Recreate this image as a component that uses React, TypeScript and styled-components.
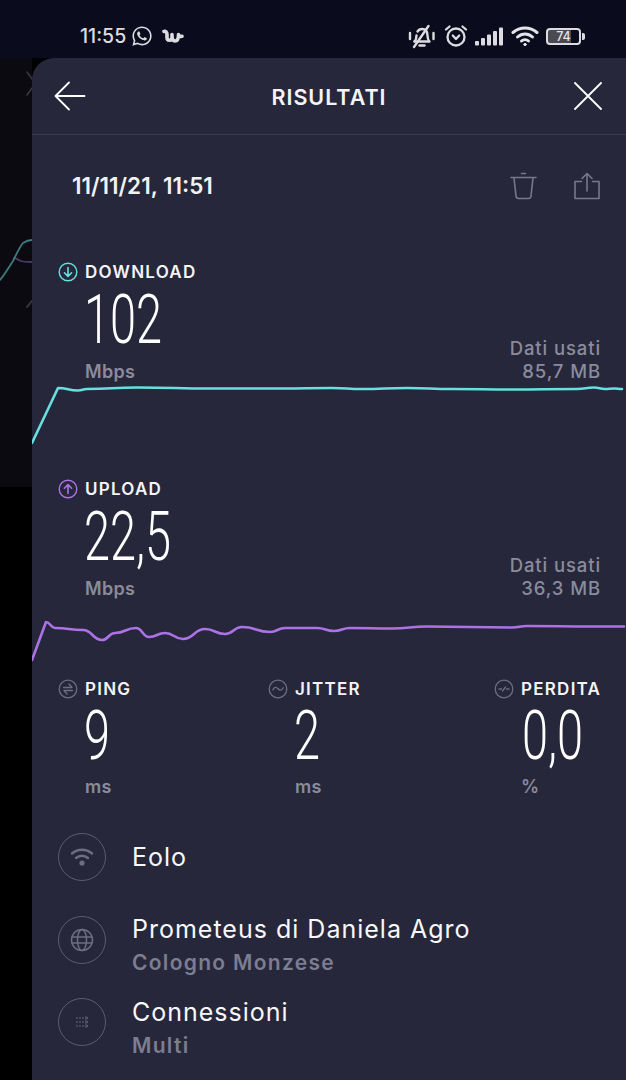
import styled, { createGlobalStyle } from "styled-components";
import { FaWhatsapp } from "react-icons/fa";

const GlobalStyle = createGlobalStyle`
	html, body {
		margin: 0;
		padding: 0;
		background: #000;
	}
	body {
		font-family: Inter, "Liberation Sans", sans-serif;
		color: #fff;
	}
`;

const Screen = styled.div`
	width: 626px;
	height: 1080px;
	overflow: hidden;
	display: flex;
	flex-direction: column;
	background: #000;
`;

const StatusBar = styled.div`
	height: 58px;
	flex-shrink: 0;
	background: #0a0b1c;
	display: flex;
	align-items: center;
	padding: 14px 45px 0 80px;
	box-sizing: border-box;
	color: #dcdce0;
`;

const Clock = styled.span`
	font-size: 19.5px;
	font-weight: 500;
	margin-right: 5px;
`;

const WishLogo = styled.svg`
	margin-left: 9px;
`;

const StatusRight = styled.div`
	margin-left: auto;
	display: flex;
	align-items: center;
	gap: 7.5px;
`;

const Battery = styled.div`
	position: relative;
	width: 31px;
	height: 13px;
	border: 2px solid #dcdce0;
	border-radius: 4px;
	font-size: 12.5px;
	font-weight: 500;
	line-height: 13px;
	text-align: center;
	color: #e4e4e8;
	background: linear-gradient(90deg, #4a4a53 74%, transparent 74%);
	&::after {
		content: "";
		position: absolute;
		right: -6px;
		top: 3px;
		width: 3px;
		height: 7px;
		border-radius: 0 2px 2px 0;
		background: #dcdce0;
	}
`;

const Body = styled.div`
	flex: 1;
	display: flex;
	min-height: 0;
`;

const BackStrip = styled.div`
	position: relative;
	width: 32px;
	flex-shrink: 0;
	background: linear-gradient(#0a0a10 0, #0a0a10 429px, #000 429px);
	svg {
		position: absolute;
		left: 0;
		top: 0;
	}
`;

const Panel = styled.div`
	flex: 1;
	min-width: 0;
	background: #26273a;
	border-top-left-radius: 22px;
`;

const Header = styled.div`
	height: 77px;
	box-sizing: border-box;
	border-bottom: 1px solid #38394b;
	display: flex;
	align-items: center;
	justify-content: space-between;
	padding: 0 24px 0 22px;
`;

const Title = styled.h1`
	margin: 0;
	font-size: 21.5px;
	font-weight: 600;
	letter-spacing: 1px;
	color: #f4f4f6;
	transform: translate(-1px, 1px);
`;

const DateRow = styled.div`
	height: 101px;
	display: flex;
	align-items: center;
	padding: 0 26px 0 40px;
	box-sizing: border-box;
	margin-bottom: 26px;
	gap: 37px;
`;

const DateText = styled.div`
	font-size: 22.5px;
	font-weight: 600;
	margin-right: auto;
	color: #f2f2f4;
`;

const Section = styled.section<{ $height: number }>`
	height: ${(p) => p.$height}px;
	position: relative;
`;

const MetricLabelRow = styled.div`
	display: flex;
	align-items: center;
	gap: 7px;
	height: 20px;
	padding-left: 26px;
`;

const MetricLabel = styled.span`
	font-size: 17px;
	font-weight: 600;
	letter-spacing: 1.25px;
	color: #f4f4f6;
`;

const BigNumber = styled.div`
	height: 62px;
	font-family: Roboto, "Liberation Sans", sans-serif;
	font-weight: 350;
	font-size: 69px;
	line-height: 62px;
	color: #fff;
	transform: scaleX(0.68);
	transform-origin: left center;
	white-space: nowrap;
`;

const SpeedValue = styled(BigNumber)`
	margin-left: 52px;
	margin-top: 7px;
`;

const UnitRow = styled.div`
	display: flex;
	justify-content: space-between;
	align-items: flex-end;
	padding: 0 25px 0 53px;
	height: 32px;
`;

const Unit = styled.div`
	font-size: 18px;
	font-weight: 600;
	line-height: 22.5px;
	letter-spacing: 0.3px;
	color: #8a8b9c;
`;

const DataUsed = styled.div`
	text-align: right;
	font-size: 18.5px;
	font-weight: 500;
	line-height: 23px;
	letter-spacing: 0.9px;
	color: #8a8b9c;
`;

const Chart = styled.svg`
	display: block;
	position: absolute;
	left: 0;
	top: 0;
	pointer-events: none;
`;

const StatsRow = styled.div`
	display: flex;
	height: 137px;
`;

const StatBlock = styled.div<{ $width: number }>`
	width: ${(p) => p.$width}px;
	flex-shrink: 0;
`;

const StatValue = styled(BigNumber)<{ $indent?: number }>`
	margin-left: ${(p) => p.$indent ?? 52}px;
	margin-top: 7px;
	height: 60px;
	line-height: 60px;
`;

const StatUnit = styled(Unit)`
	margin-left: 53px;
	margin-top: 10px;
`;

const InfoList = styled.div`
	display: flex;
	flex-direction: column;
`;

const InfoRow = styled.div`
	height: 82.5px;
	display: flex;
	align-items: center;
	padding-left: 26px;
	gap: 26px;
`;

const InfoCircle = styled.div`
	width: 46px;
	height: 46px;
	border: 1.5px solid #5b5c6e;
	border-radius: 50%;
	display: flex;
	align-items: center;
	justify-content: center;
	flex-shrink: 0;
`;

const InfoText = styled.div<{ $twoLines?: boolean }>`
	margin-top: ${(p) => (p.$twoLines ? 13 : 0)}px;
`;

const InfoTitle = styled.div`
	font-size: 25px;
	font-weight: 400;
	letter-spacing: 1px;
	line-height: 33px;
	color: #f8f8fa;
`;

const InfoSub = styled.div`
	font-size: 21px;
	font-weight: 600;
	letter-spacing: 1.3px;
	line-height: 33px;
	color: #7c7d91;
`;

const CYAN = "#66e0e0";
const PURPLE = "#ac72e6";

function smooth(points: number[][]) {
	// catmull-rom-ish path, good enough for the little chart wobble
	let d = `M${points[0][0]} ${points[0][1]}`;
	for (let i = 1; i < points.length; i++) {
		const [x0, y0] = points[i - 1];
		const [x1, y1] = points[i];
		const mx = (x0 + x1) / 2;
		d += i === 1 ? ` L${x1} ${y1}` : ` C${mx} ${y0} ${mx} ${y1} ${x1} ${y1}`;
	}
	return d;
}

const downloadLine = [
	[0, 181], [26, 126], [46, 128.5], [55, 127], [105, 125.5], [180, 126.5], [250, 126.5],
	[300, 126], [330, 127], [375, 126], [420, 127], [480, 127.5], [545, 127], [562, 125.5],
	[573, 127], [582, 126.5], [590, 127],
];

const uploadLine = [
	[0, 181], [14, 143], [23, 149], [51, 151], [70, 161], [83, 154], [104, 149], [117, 158],
	[133, 154], [151, 160], [173, 150], [193, 155], [210, 148], [238, 153], [253, 149],
	[285, 149], [302, 152], [318, 149], [360, 149.5], [395, 147.5], [480, 148.5], [495, 147], [560, 147.5], [592, 147.5],
];

function ArrowCircle({ color, up }: { color: string; up?: boolean }) {
	return (
		<svg width="20" height="20" viewBox="0 0 20 20" fill="none" stroke={color} strokeLinecap="round" strokeLinejoin="round">
			<circle cx="10" cy="10" r="8.8" strokeWidth="1.4" />
			{up ? (
				<path d="M10 14.5V5.8M6.4 9.2L10 5.6l3.6 3.6" strokeWidth="1.6" />
			) : (
				<path d="M10 5.5v8.7M6.4 10.8l3.6 3.6 3.6-3.6" strokeWidth="1.6" />
			)}
		</svg>
	);
}

function StatIcon({ kind }: { kind: "ping" | "jitter" | "loss" }) {
	return (
		<svg width="20" height="20" viewBox="0 0 20 20" fill="none" stroke="#6d6e80" strokeWidth="1.3" strokeLinecap="round" strokeLinejoin="round">
			<circle cx="10" cy="10" r="8.8" />
			{kind === "ping" && <path d="M5.5 8.5H14l-3-3.500M14.500 11.500H6l3 3.500" />}
			{kind === "jitter" && <path d="M4.8 11c1.3-3 3.300-3.300 5.200-1.200s3.900 1.800 5.200-1" />}
			{kind === "loss" && <path d="M5 10h2.500M8.500 12l3-4M12.500 10H15" />}
		</svg>
	);
}

function App() {
	return (
		<Screen>
			<GlobalStyle />
			<StatusBar>
				<Clock>11:55</Clock>
				<FaWhatsapp size={22} color="#dcdce0" />
				<WishLogo width="22" height="15" viewBox="0 0 22 15" fill="none" stroke="#dcdce0" strokeWidth="3.6" strokeLinejoin="round" strokeLinecap="round">
					<path d="M2 2.500c1.500-.5 3 .5 3 3v3c0 3.500 4.500 3.500 5 .5V5.500c0 4.500 .5 6.500 3 6.500s3.500-3 3.500-6.500c0 1.500 1.500 2.200 3.500 1.800" />
				</WishLogo>
				<StatusRight>
					<svg width="28" height="26" viewBox="0 0 28 26" fill="none" stroke="#dcdce0" strokeWidth="2.4" strokeLinecap="round" strokeLinejoin="round">
						<path d="M6.500 18.500h15c-1.500-1.500-2-3-2-6 0-4-2-6.500-5.500-6.500-2 0-3.500 1-4.500 2.500" />
						<path d="M8.500 12.500c0 2.500-.5 4.500-2 6" />
						<path d="M11.500 22.500h5" />
						<path d="M6 24L20.500 3" />
						<path d="M2 10v6M25.500 10v6" />
					</svg>
					<svg width="24" height="24" viewBox="0 0 24 24" fill="none" stroke="#dcdce0" strokeWidth="2.3" strokeLinecap="round" strokeLinejoin="round">
						<circle cx="12" cy="13" r="8.500" />
						<path d="M2 5.500L5.500 2.500M22 5.500L18.500 2.500" />
						<path d="M8.800 11.500L12 15l3.200-3.500" />
					</svg>
					<svg width="28" height="19" viewBox="0 0 28 19" fill="#dcdce0">
						<rect x="0" y="14" width="4" height="4.5" rx="1" />
						<rect x="6" y="11" width="4" height="7.5" rx="1" />
						<rect x="12" y="7.5" width="4" height="11" rx="1" />
						<rect x="18" y="4" width="4" height="14.5" rx="1" />
						<rect x="24" y="0.5" width="4" height="18" rx="1" />
					</svg>
					<svg width="28" height="22" viewBox="0 0 28 22" fill="none" stroke="#e4e4e8" strokeWidth="3" strokeLinecap="round">
						<path d="M2 7.500C9 1.500 19 1.500 26 7.500" />
						<path d="M6.500 12c4.500-4 10.500-4 15 0" />
						<path d="M10.500 16c2-1.800 5-1.800 7 0" />
						<circle cx="14" cy="19.5" r="1.2" fill="#e4e4e8" strokeWidth="1" />
					</svg>
					<Battery>74</Battery>
				</StatusRight>
			</StatusBar>
			<Body>
				<BackStrip>
					<svg width="32" height="300" viewBox="0 0 32 300" fill="none" strokeLinecap="round">
						<path d="M27 14l5 7M27 37l5-7" stroke="#3a3a42" strokeWidth="1.5" />
						<path d="M14 200c2 0 4 2 7 3s7 1 11 1" stroke="#4f3a66" strokeWidth="1.8" />
						<path d="M0 222c5-6 9-13 13-19 3-6 6-13 10-18 3-2 6-3 9-3" stroke="#3f7a7e" strokeWidth="1.8" />
						<path d="M27 249l5-6" stroke="#34343c" strokeWidth="2" />
					</svg>
				</BackStrip>
				<Panel>
					<Header>
						<svg width="32" height="30" viewBox="0 0 32 30" fill="none" stroke="#fff" strokeWidth="1.8" strokeLinecap="round" strokeLinejoin="round">
							<path d="M1.500 15h29M15 1.500L1.500 15 15 28.500" />
						</svg>
						<Title>RISULTATI</Title>
						<svg width="28" height="28" viewBox="0 0 28 28" fill="none" stroke="#fff" strokeWidth="1.8" strokeLinecap="round">
							<path d="M1 1l26 26M27 1L1 27" />
						</svg>
					</Header>
					<DateRow>
						<DateText>11/11/21, 11:51</DateText>
						<svg width="27" height="28" viewBox="0 0 27 28" fill="none" stroke="#77788c" strokeWidth="1.6" strokeLinecap="round" strokeLinejoin="round">
							<path d="M1 5.500h25M11.500 1.500h4" />
							<path d="M4 6l2 18c.2 1.800 1 2.500 2.500 2.500h10c1.500 0 2.300-.7 2.500-2.500l2-18" />
						</svg>
						<svg width="26" height="28" viewBox="0 0 26 28" fill="none" stroke="#77788c" strokeWidth="1.6" strokeLinecap="round" strokeLinejoin="round">
							<path d="M7.500 9.500H1v17h24v-17h-6.500" />
							<path d="M13 19V1.500M8 6.500l5-5 5 5" />
						</svg>
					</DateRow>
					<Section $height={217}>
						<MetricLabelRow>
							<ArrowCircle color={CYAN} />
							<MetricLabel>DOWNLOAD</MetricLabel>
						</MetricLabelRow>
						<SpeedValue>102</SpeedValue>
						<UnitRow>
							<Unit>Mbps</Unit>
							<DataUsed>
								Dati usati
								<br />
								85,7 MB
							</DataUsed>
						</UnitRow>
						<Chart width="594" height="200" viewBox="0 0 594 200" fill="none">
							<path d={smooth(downloadLine)} stroke={CYAN} strokeWidth="2.6" strokeLinejoin="round" strokeLinecap="round" />
						</Chart>
					</Section>
					<Section $height={200}>
						<MetricLabelRow>
							<ArrowCircle color={PURPLE} up />
							<MetricLabel>UPLOAD</MetricLabel>
						</MetricLabelRow>
						<SpeedValue>22,5</SpeedValue>
						<UnitRow>
							<Unit>Mbps</Unit>
							<DataUsed>
								Dati usati
								<br />
								36,3 MB
							</DataUsed>
						</UnitRow>
						<Chart width="594" height="200" viewBox="0 0 594 200" fill="none">
							<path d={smooth(uploadLine)} stroke={PURPLE} strokeWidth="2.6" strokeLinejoin="round" strokeLinecap="round" />
						</Chart>
					</Section>
					<StatsRow>
						<StatBlock $width={210}>
							<MetricLabelRow>
								<StatIcon kind="ping" />
								<MetricLabel>PING</MetricLabel>
							</MetricLabelRow>
							<StatValue>9</StatValue>
							<StatUnit>ms</StatUnit>
						</StatBlock>
						<StatBlock $width={226}>
							<MetricLabelRow>
								<StatIcon kind="jitter" />
								<MetricLabel>JITTER</MetricLabel>
							</MetricLabelRow>
							<StatValue>2</StatValue>
							<StatUnit>ms</StatUnit>
						</StatBlock>
						<StatBlock $width={158}>
							<MetricLabelRow>
								<StatIcon kind="loss" />
								<MetricLabel>PERDITA</MetricLabel>
							</MetricLabelRow>
							<StatValue $indent={54}>0,0</StatValue>
							<StatUnit>%</StatUnit>
						</StatBlock>
					</StatsRow>
					<InfoList>
						<InfoRow>
							<InfoCircle>
								<svg width="24" height="20" viewBox="0 0 24 20" fill="none" stroke="#6d6e80" strokeWidth="2.4" strokeLinecap="round">
									<path d="M2 6.500C8 1.500 16 1.500 22 6.500" />
									<path d="M6 11c3.500-3 8.500-3 12 0" />
									<circle cx="12" cy="16" r="1.4" fill="#6d6e80" />
								</svg>
							</InfoCircle>
							<InfoText>
								<InfoTitle>Eolo</InfoTitle>
							</InfoText>
						</InfoRow>
						<InfoRow>
							<InfoCircle>
								<svg width="24" height="24" viewBox="0 0 24 24" fill="none" stroke="#6d6e80" strokeWidth="1.5">
									<circle cx="12" cy="12" r="10.5" />
									<ellipse cx="12" cy="12" rx="4.5" ry="10.5" />
									<path d="M1.500 9h21M1.500 15h21" />
								</svg>
							</InfoCircle>
							<InfoText $twoLines>
								<InfoTitle>Prometeus di Daniela Agro</InfoTitle>
								<InfoSub>Cologno Monzese</InfoSub>
							</InfoText>
						</InfoRow>
						<InfoRow>
							<InfoCircle>
								<svg width="14" height="14" viewBox="0 0 14 14" fill="none" stroke="#6d6e80" strokeWidth="0.9" strokeDasharray="2 1">
									<path d="M1 3h10M1 7h10M1 11h10" />
									<path d="M10.500 1.500L13 3l-2.500 1.500M10.500 5.500L13 7l-2.500 1.500M10.500 9.500L13 11l-2.500 1.500" strokeDasharray="none" />
								</svg>
							</InfoCircle>
							<InfoText $twoLines>
								<InfoTitle>Connessioni</InfoTitle>
								<InfoSub>Multi</InfoSub>
							</InfoText>
						</InfoRow>
					</InfoList>
				</Panel>
			</Body>
		</Screen>
	);
}

export default App;
